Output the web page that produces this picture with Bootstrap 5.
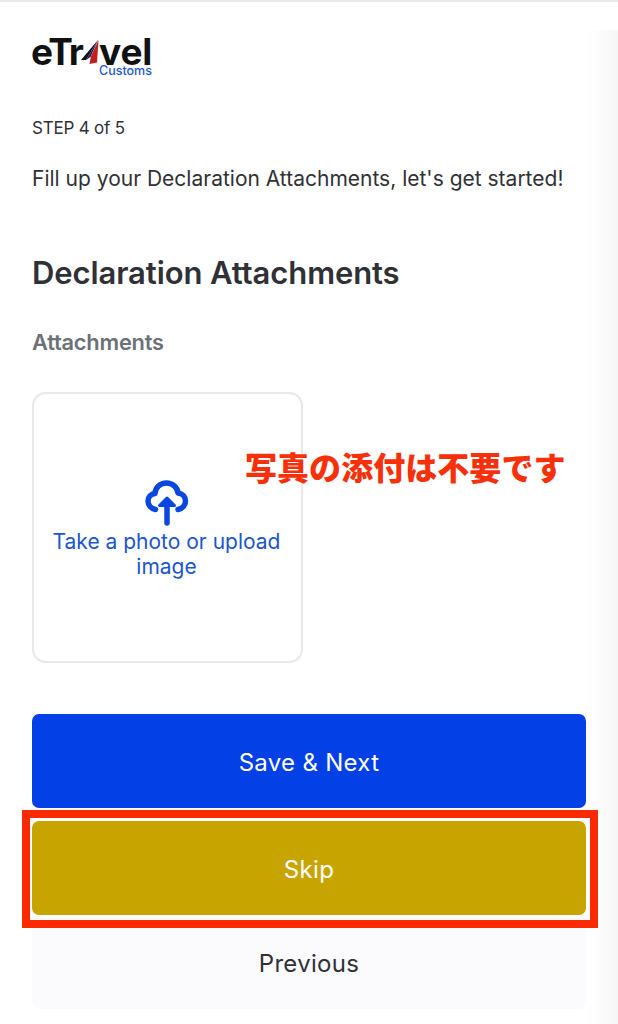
<!DOCTYPE html>
<html lang="en">
<head>
<meta charset="utf-8">
<title>Declaration Attachments</title>
<link rel="stylesheet" href="https://cdn.jsdelivr.net/npm/bootstrap@5.3.0/dist/css/bootstrap.min.css">
<style>
html,body{height:1024px;overflow:hidden;background:#fff}
body{font-family:Inter,"Noto Sans CJK JP",sans-serif;color:#2f3136;position:relative}
.topline{height:2px;background:#e9e9e9}
.sidefade{position:absolute;top:30px;right:0;bottom:0;width:34px;background:linear-gradient(90deg,#fff 0,#fdfdfe 40%,#f6f6f7 100%)}
.pagewrap{position:relative;padding:36px 32px 0 32px}
.brand{height:40px;width:125px;position:relative}
.brand-word{position:absolute;top:1px;font-size:37px;font-weight:700;line-height:26px;letter-spacing:-.1px;color:#111;white-space:nowrap}
.brand-left{left:-1px;letter-spacing:-2px}
.brand-right{left:67px}
.brand-mark{position:absolute;left:46px;top:0}
.brand-sub{position:absolute;left:67px;top:27px;font-size:12.5px;font-weight:500;line-height:11px;color:#1f55d0}
.steptxt{font-size:17px;line-height:24px;margin-top:38px;letter-spacing:-.2px}
.intro{font-size:21px;line-height:28px;margin-top:25px;white-space:nowrap}
.secthead{font-size:31px;line-height:36px;font-weight:600;margin-top:62px;letter-spacing:-.1px}
.fieldlabel{font-size:21.8px;line-height:28px;font-weight:600;color:#6c7079;margin-top:37px;letter-spacing:-.2px}
.dropbox{width:271px;height:271px;margin-top:36px;border:2px solid #e8e8ea;border-radius:14px;color:#1c55cc;font-size:21px;line-height:25px;padding:4px 18px 0 16px}
.dropbox svg{margin-bottom:3px}
.notejp{position:absolute;left:245px;top:446px;font-family:"Noto Sans CJK JP",sans-serif;font-weight:900;font-size:32px;line-height:40px;color:#f7300a;white-space:nowrap;letter-spacing:.05px}
.actbtn{display:block;width:100%;height:94px;border:0;border-radius:7px;font-size:24px;letter-spacing:.3px;padding-top:10px}
.btn-save{background:#0340e6;color:#fff;margin-top:51px}
.btn-skip{background:#c8a400;color:#fff;margin-top:13px}
.btn-prev{background:#fbfbfe;color:#2f3136}
.skipwrap{position:relative}
.redframe{position:absolute;left:-10px;right:-12px;top:-11px;height:118px;border:8px solid #fb2a00;pointer-events:none}
</style>
</head>
<body>
<div class="topline"></div>
<div class="sidefade"></div>
<main class="pagewrap">
  <div class="brand">
    <div class="brand-word brand-left">eTr</div>
    <svg class="brand-mark" width="26" height="28" viewBox="0 0 26 28" aria-hidden="true">
      <path d="M3 22 20 2 8 22Z" fill="#111"/>
      <path d="M20 2 8 22 12.500 19Z" fill="#13246e"/>
      <path d="M20.500 2 13 18 11.500 26 19 24.500Z" fill="#c41c1c"/>
    </svg>
    <div class="brand-word brand-right">vel</div>
    <div class="brand-sub">Customs</div>
  </div>
  <div class="steptxt">STEP 4 of 5</div>
  <p class="intro mb-0">Fill up your Declaration Attachments, let's get started!</p>
  <h2 class="secthead mb-0">Declaration Attachments</h2>
  <div class="fieldlabel">Attachments</div>
  <div class="dropbox d-flex flex-column align-items-center justify-content-center text-center">
    <svg width="44" height="46" viewBox="0 0 44 46" fill="none" stroke="#0a46e0" stroke-width="5.500" stroke-linecap="round" stroke-linejoin="round" aria-hidden="true">
      <path d="M10.500 29.500C6 28.500 3 25 3 21 3 17 6 14 10 13.500 10 7.500 15.500 3 21.500 3 27.500 3 32.500 7.500 33 13 37.500 13.500 40.500 17 40.500 21 40.500 25 37.500 28.500 33 29.500"/>
      <path d="M22 43V22"/>
      <path d="M22 18 14.500 25.500H29.500Z" fill="#0a46e0" stroke-width="3"/>
    </svg>
    <div>Take a photo or upload image</div>
  </div>
  <button type="button" class="btn actbtn btn-save">Save &amp; Next</button>
  <div class="skipwrap">
    <button type="button" class="btn actbtn btn-skip">Skip</button>
    <div class="redframe"></div>
  </div>
  <button type="button" class="btn actbtn btn-prev">Previous</button>
</main>
<div class="notejp">写真の添付は不要です</div>
<script src="https://cdn.jsdelivr.net/npm/bootstrap@5.3.0/dist/js/bootstrap.bundle.min.js"></script>
</body>
</html>
